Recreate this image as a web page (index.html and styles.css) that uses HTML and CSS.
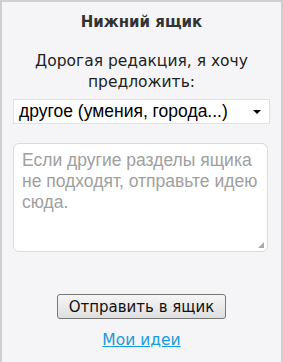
FILE: index.html
```html
<!DOCTYPE html>
<html lang="ru">
<head>
  <meta charset="UTF-8" />
  <meta name="viewport" content="width=device-width, initial-scale=1.0" />
  <title>Нижний ящик</title>
  <link rel="stylesheet" href="styles.css">
</head>
<body>

<!-- Idea box -->
<div class="box">
  <h3 class="box-title">Нижний ящик</h3>
  <p class="box-intro">Дорогая редакция, я хочу предложить:</p>

  <div class="select-wrap">
    <span class="select-value">другое (умения, города...)</span>
    <span class="select-arrow"></span>
  </div>

  <div class="idea-text">
    <textarea placeholder="Если другие разделы ящика не подходят, отправьте идею сюда."></textarea>
    <span class="grip"></span>
  </div>

  <div class="actions">
    <button class="send-btn" type="button">Отправить в ящик</button>
    <a class="my-ideas" href="#">Мои идеи</a>
  </div>
</div>

</body>
</html>
```

FILE: styles.css
```css
/* =========================
   Page
   ========================= */
body {
  margin: 0;
  padding: 0;
  font-family: "DejaVu Sans", Verdana, sans-serif;
  background-color: #fff;
}

/* =========================
   Box
   ========================= */
.box {
  background-color: #f5f5f7;
  border: 2px solid #cfcfcf;
  border-bottom: none;
  height: 360px;
  padding: 0 11px;
}

.box-title {
  margin: 0;
  padding-top: 10px;
  text-align: center;
  font-size: 15px;
  font-weight: bold;
  color: #333;
  line-height: 20px;
}

.box-intro {
  margin: 19px 0 6px;
  text-align: center;
  font-size: 15.5px;
  line-height: 21px;
  color: #222;
  padding: 0 18px;
}

/* =========================
   Select
   ========================= */
.select-wrap {
  display: flex;
  align-items: center;
  justify-content: space-between;
  height: 23px;
  background-color: #fff;
  border: 1px solid #e2e2e2;
  padding: 0 8px 0 5px;
  font-family: "Liberation Sans", Arial, sans-serif;
  font-size: 17.5px;
  color: #000;
}

.select-arrow {
  width: 0;
  height: 0;
  border-left: 4px solid transparent;
  border-right: 4px solid transparent;
  border-top: 4px solid #000;
}

/* =========================
   Textarea
   ========================= */
.idea-text {
  position: relative;
  margin: 19px 2px 0 0;
}

.idea-text textarea {
  display: block;
  width: 100%;
  height: 109px;
  box-sizing: border-box;
  border: 1px solid #dcdcdc;
  border-radius: 6px;
  background-color: #fff;
  padding: 6px 8px;
  font-family: "Liberation Sans", Arial, sans-serif;
  font-size: 17.5px;
  line-height: 21px;
  resize: none;
}

.idea-text textarea::placeholder {
  color: #a0a0a0;
}

.grip {
  position: absolute;
  right: 4px;
  bottom: 4px;
  width: 6px;
  height: 6px;
  background-image: radial-gradient(circle, #aaa 0.8px, transparent 1px);
  background-size: 2px 2px;
  clip-path: polygon(100% 0, 100% 100%, 0 100%);
}

/* =========================
   Actions
   ========================= */
.actions {
  display: flex;
  flex-direction: column;
  align-items: center;
  margin-top: 42px;
}

.send-btn {
  font-family: "DejaVu Sans", Verdana, sans-serif;
  font-size: 15px;
  color: #111;
  height: 25px;
  padding: 0 11px;
  border: 1px solid #777;
  border-radius: 3px;
  background: linear-gradient(#f6f6f6, #dedede);
}

.my-ideas {
  margin-top: 12px;
  font-size: 15.5px;
  color: #1a9bdb;
  text-decoration: underline;
}
```
